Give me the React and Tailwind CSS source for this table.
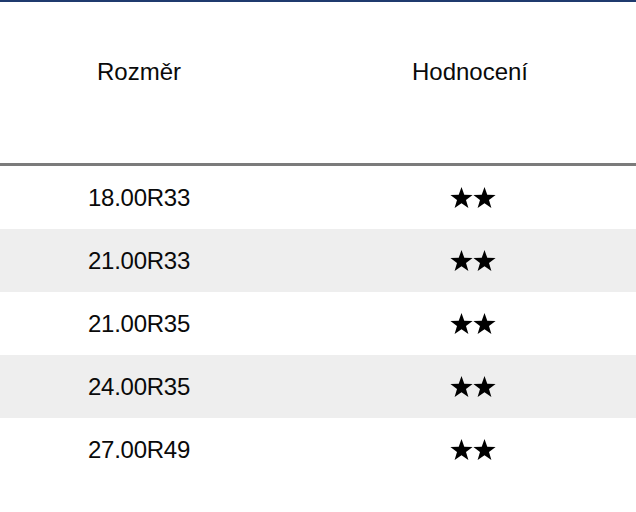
import React from 'react';

const rows = ['18.00R33', '21.00R33', '21.00R35', '24.00R35', '27.00R49'];

function Star() {
  return (
    <svg width="23" height="22" viewBox="0 0 24 23" className="block">
      <polygon
        fill="#000"
        points="12,0 14.9,8.2 23.6,8.4 16.7,13.7 19.2,22 12,17.1 4.8,22 7.3,13.7 0.4,8.4 9.1,8.2"
      />
    </svg>
  );
}

function Stars() {
  return (
    <div className="flex">
      <Star />
      <Star />
    </div>
  );
}

export default function App() {
  return (
    <div
      className="w-[636px] h-[512px] overflow-hidden bg-white text-[#0a0a0a]"
      style={{ fontFamily: '"Liberation Sans", Arial, sans-serif' }}
    >
      <div className="w-[662px] border-t-2 border-[#1f3a6e]">
        {/* header */}
        <div className="grid grid-cols-[278px_384px] h-[164px] pt-[56px] text-[24px] leading-[28px] border-b-[3px] border-[#7b7b7b]">
          <div className="text-center">Rozměr</div>
          <div className="text-center">Hodnocení</div>
        </div>

        {/* rows */}
        {rows.map((size, i) => (
          <div
            key={size}
            className={
              'grid grid-cols-[278px_384px] h-[63px] items-center ' +
              (i % 2 === 1 ? 'bg-[#eeeeee]' : 'bg-white')
            }
          >
            <div className="text-center text-[24px] leading-[28px] tracking-[-0.25px] pt-[1px]">
              {size}
            </div>
            <div className="flex justify-center pl-[5px]">
              <Stars />
            </div>
          </div>
        ))}
      </div>
    </div>
  );
}
